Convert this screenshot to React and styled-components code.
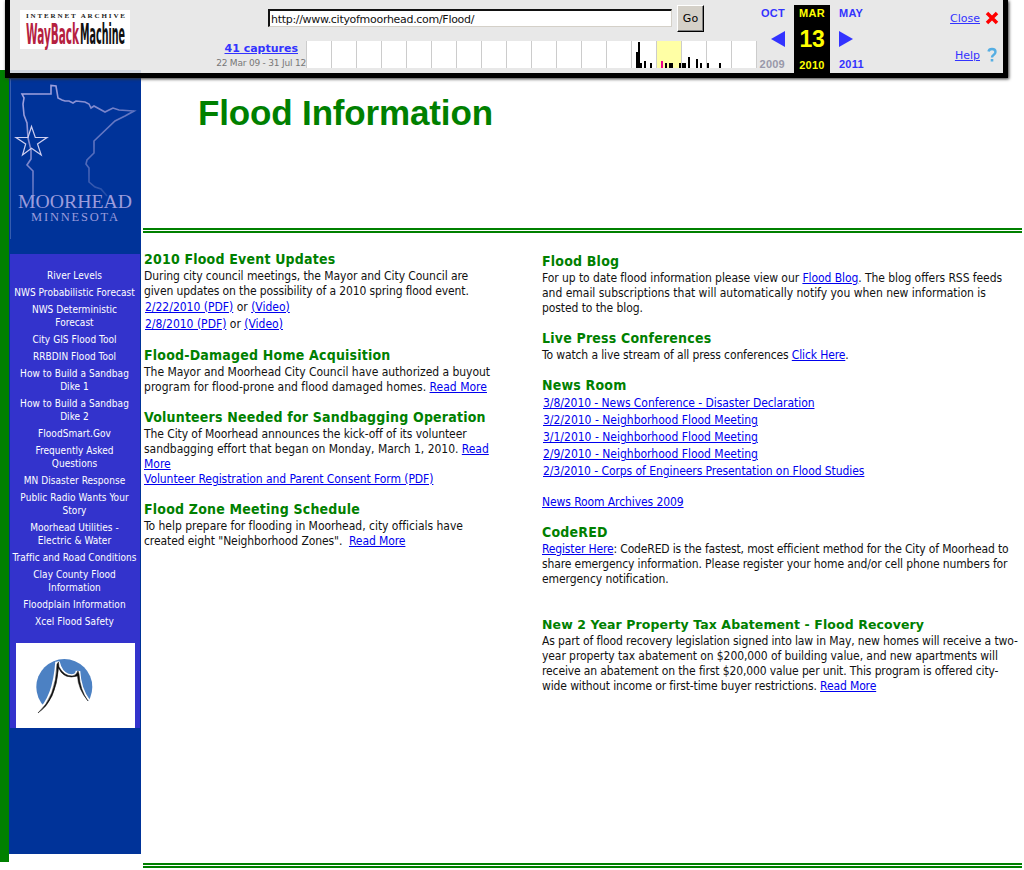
import React from "react";
import styled, { createGlobalStyle } from "styled-components";

const Global = createGlobalStyle`
  * { box-sizing: border-box; }
  html, body { margin: 0; padding: 0; background: #fff; overflow: hidden; }
  body { font-family: "DejaVu Sans Condensed", "DejaVu Sans", sans-serif; font-stretch: condensed; font-size: 12px; color: #111; }
`;

const Page = styled.div`
  position: relative;
  width: 1024px;
  height: 870px;
  padding-top: 70px;
  display: flex;
  align-items: flex-start;
  overflow: hidden;
`;
const GreenStrip = styled.div`width: 9px; height: 792px; background: #008000; flex: none;`;
const Sidebar = styled.aside`
  width: 132px; height: 784px; flex: none; background: #003399; padding: 0 1px;
`;
const MapArea = styled.div`height: 184px; svg { display: block; }`;
const Nav = styled.nav`
  height: 474px; background: #3333cc; padding: 15px 1px 0 0;
  display: flex; flex-direction: column; align-items: center; gap: 4px;
`;
const NavItem = styled.a`
  color: #fff; font-size: 10px; line-height: 13px; text-align: center; white-space: pre;
  letter-spacing: 0.05px;
`;
const Badge = styled.div`
  width: 119px; height: 85px; background: #fff; margin: 11px 0 0 1px; flex: none;
  svg { display: block; }
`;

const Main = styled.main`width: 879px; margin-left: 2px; height: 800px; display: flex; flex-direction: column;`;
const Title = styled.h1`
  margin: 0; height: 158px; padding: 22px 0 0 55px; color: #008000;
  font: bold 35px/42px "Liberation Sans", sans-serif; letter-spacing: -0.15px;
`;
const Rule = styled.div`height: 5px; flex: none; border-top: 2px solid #008000; border-bottom: 2px solid #008000;`;
const Columns = styled.div`height: 630px; display: flex;`;
const Column = styled.div`
  width: ${(p) => p.$w}px; padding: ${(p) => p.$top}px 0 0 1px; flex: none;
`;
const Story = styled.section`margin-bottom: ${(p) => p.$gap ?? 15}px;`;
const Heading = styled.h2`
  margin: 0; color: #008000; white-space: nowrap; height: 17px;
  font: bold 14px/17px "DejaVu Sans Condensed", "DejaVu Sans", sans-serif;
  font-stretch: condensed; letter-spacing: ${(p) => p.$track ?? 0.2}px;
`;
const WideHeading = styled(Heading)`
  font: bold 12.5px/17px "DejaVu Sans", sans-serif; font-stretch: normal;
`;
const Line = styled.div`
  height: ${(p) => (p.$tall ? 17 : 15)}px; line-height: ${(p) => (p.$tall ? 19 : 17)}px;
  padding-left: ${(p) => (p.$tall ? 1 : 0)}px; white-space: pre;
  letter-spacing: ${(p) => p.$track || 0}px;
`;
const Link = styled.a`color: #0000ee; text-decoration: underline; text-underline-offset: 1px; text-decoration-thickness: 1px;`;

const Toolbar = styled.header`
  position: absolute; left: 5px; top: 0; width: 1003px; height: 78px;
  border: solid #000; border-width: 0 5px 5px; background: rgba(231, 231, 231, 0.9);
  background-image: linear-gradient(#e8e8e8, #e8e8e8); background-size: 100% 70px; background-repeat: no-repeat;
  box-shadow: 1px 1px 3px #333; display: flex; font-family: "DejaVu Sans", sans-serif; font-stretch: normal;
`;
const LogoBox = styled.div`width: 110px; height: 39px; margin: 10px 0 0 10px; background: #fff; flex: none; svg { display: block; overflow: visible; }`;
const Center = styled.div`width: 660px; margin-left: 76px; flex: none;`;
const UrlRow = styled.div`height: 41px; padding: 5px 0 0 62px; display: flex; gap: 5px;`;
const UrlField = styled.div`
  width: 404px; height: 18px; margin-top: 4px; background: #fff; font-size: 11px; line-height: 17px; padding-left: 1px;
  letter-spacing: -0.3px;
  border: 2px solid; border-color: #111 #d4d0c8 #d4d0c8 #111; border-right-width: 1px; border-bottom-width: 1px; 
`;
const GoButton = styled.button`
  width: 27px; height: 27px; padding: 0; background: #d4d0c8; color: #000; font: 11px "DejaVu Sans", sans-serif;
  border: 1px solid; border-color: #fff #000 #000 #fff; box-shadow: inset -1px -1px #808080;
`;
const CaptureRow = styled.div`display: flex; height: 28px;`;
const Captures = styled.div`width: 100px; padding-top: 1px; text-align: right; white-space: nowrap;`;
const CaptureCount = styled.a`
  display: block; color: #3333ff; font-weight: bold; font-size: 11px; line-height: 14px; text-decoration: underline; padding-right: 8px;
`;
const CaptureRange = styled.div`font-size: 9px; line-height: 15px; color: #777; letter-spacing: -0.2px;`;
const Spark = styled.svg`display: block; flex: none;`;

const Dates = styled.div`display: flex; margin-left: -110px; margin-top: 5px; height: 68px; flex: none; font: bold 11px "Liberation Sans", sans-serif; letter-spacing: 0.25px;`;
const DateCol = styled.div`
  width: ${(p) => p.$w}px; padding: ${(p) => p.$pad || 0}; background: ${(p) => (p.$now ? "#000" : "transparent")};
  color: ${(p) => (p.$now ? "#ffff00" : "#3333ff")}; text-align: ${(p) => p.$align || "center"};
  display: flex; flex-direction: column; justify-content: space-between; height: 68px;
  svg { display: block; }
`;
const DateText = styled.span`line-height: 17px; color: ${(p) => p.$color || "inherit"};`;
const Day = styled.span`font-size: 23px; line-height: 35px; letter-spacing: -0.4px;`;
const Actions = styled.div`margin-left: auto; padding: 10px 4px 0 0; display: flex; flex-direction: column; align-items: flex-end; gap: 21px; flex: none;`;
const Action = styled.a`
  display: flex; align-items: center; gap: 5px; height: 16px; color: #3333ff; font-size: 11px; svg { display: block; }
  span { text-decoration: underline; text-underline-offset: 1px; }
`;

const A = ({ children }) => <Link>{children}</Link>;

const links = [
  "River Levels", "NWS Probabilistic Forecast", "NWS Deterministic\nForecast", "City GIS Flood Tool",
  "RRBDIN Flood Tool", "How to Build a Sandbag\nDike 1", "How to Build a Sandbag\nDike 2", "FloodSmart.Gov",
  "Frequently Asked\nQuestions", "MN Disaster Response", "Public Radio Wants Your\nStory",
  "Moorhead Utilities -\nElectric & Water", "Traffic and Road Conditions", "Clay County Flood\nInformation",
  "Floodplain Information", "Xcel Flood Safety",
];

function MapLogo() {
  return (
    <svg width="130" height="184" viewBox="10 70 130 184">
      <defs>
        <linearGradient id="fade" x1="22" y1="85" x2="115" y2="205" gradientUnits="userSpaceOnUse">
          <stop offset="0" stopColor="#a9a8e2" /><stop offset="0.45" stopColor="#7c86cc" /><stop offset="1" stopColor="#10409f" />
        </linearGradient>
      </defs>
      <path d="M33 204V171L27 165L31 159V150L28 138L27 123L24 115L23 104L24 98L22 94H51V85.500L56 86L58 98L62 100L65 101L69 101L73 103L76 101L85 102L89 104L91 108L94 106L105 112L109 110L113 108L119 110L134 111L125 116L115 121L94 141V153L87 160L86 164L89 168V182L95 187L101 189L107 196" fill="none" stroke="url(#fade)" strokeWidth="1.6" />
      <path d="M31.500 126.500L35.300 137.500H47L37.500 144L41.200 155L31.500 148.200L22.500 155L25.700 144L16 137.500H28Z" fill="none" stroke="#cfcff0" strokeWidth="1.2" />
      <g fill="#9c9cdc" fontFamily="Liberation Serif, serif">
        <text x="18" y="208" fontSize="19" textLength="114" lengthAdjust="spacingAndGlyphs">MOORHEAD</text>
        <text x="31" y="220.500" fontSize="12.500" textLength="87" lengthAdjust="spacing">MINNESOTA</text>
      </g>
      <path d="M10 79V239" stroke="#6c86c4" strokeWidth="1" />
    </svg>
  );
}

function BridgeLogo() {
  return (
    <svg width="119" height="85" viewBox="16 643 119 85">
      <circle cx="64.300" cy="687" r="28" fill="#4c81c3" />
      <path d="M34 718Q54 699 56 664L58 661Q63 675 71 677Q77 677 77.500 671Q80 672 80 682Q83 696 91 704V728H34Z" fill="#fff" />
      <path d="M38 713Q55 699 57.500 662Q60 673 68 676Q77 678 78 671Q79 689 88 701" fill="none" stroke="#fff" strokeWidth="4.500" />
      <path d="M38 713Q56 697 57 664L58.500 662L59 667Q64 676 72 676Q76 676 78 671L79 674Q80 690 88 701Q78 689 77.500 676Q64 680 58.500 668Q56 701 38 713Z" fill="#111" stroke="#111" strokeWidth=".5" />
    </svg>
  );
}

function WaybackLogo() {
  return (
    <svg width="110" height="39" viewBox="0 0 110 39">
      <text x="6" y="7.500" fontFamily="Liberation Serif, serif" fontWeight="bold" fontSize="7" textLength="99" lengthAdjust="spacing" fill="#222">INTERNET ARCHIVE</text>
      <g fontFamily="DejaVu Sans Condensed, sans-serif" fontWeight="bold">
        <text transform="translate(6 34) scale(1 1.6)" fontSize="18" textLength="53" lengthAdjust="spacingAndGlyphs" fill="#b5213f">WayBack</text>
        <text transform="translate(60 34) scale(1 1.6)" fontSize="18" textLength="45" lengthAdjust="spacingAndGlyphs" fill="#111">Machine</text>
      </g>
    </svg>
  );
}

const bars = [[330, 16], [332, 26], [334, 5], [338, 7], [344, 5], [359, 5], [363, 5], [365, 5], [373, 5], [376, 5], [378, 5], [382, 11], [390, 9], [394, 5], [401, 5], [413, 5]];

function Sparkline() {
  return (
    <Spark width="451" height="28" viewBox="0 0 451 28">
      <rect width="450" height="27" fill="#fff" />
      <rect x="350" width="25" height="27" fill="#ffffa5" />
      {Array.from({ length: 19 }, (_, i) => <rect key={i} x={i * 25} width="1" height="27" fill="#ccc" />)}
      {bars.map(([x, h]) => <rect key={x} x={x} y={27 - h} width="2" height={h} />)}
      <rect x="355" y="20" width="2" height="7" fill="#ec008c" />
    </Spark>
  );
}

export default function App() {
  return (
    <Page>
      <Global />
      <GreenStrip />
      <Sidebar>
        <MapArea><MapLogo /></MapArea>
        <Nav>
          {links.map((label) => <NavItem key={label}>{label}</NavItem>)}
          <Badge><BridgeLogo /></Badge>
        </Nav>
      </Sidebar>
      <Main>
        <Title>Flood Information</Title>
        <Rule />
        <Columns>
          <Column $w={398} $top={18}>
            <Story>
              <Heading>2010 Flood Event Updates</Heading>
              <Line $track={-0.07}>During city council meetings, the Mayor and City Council are</Line>
              <Line $track={-0.12}>given updates on the possibility of a 2010 spring flood event.</Line>
              <Line $tall><A>2/22/2010 (PDF)</A> or <A>(Video)</A></Line>
              <Line $tall><A>2/8/2010 (PDF)</A> or <A>(Video)</A></Line>
            </Story>
            <Story>
              <Heading>Flood-Damaged Home Acquisition</Heading>
              <Line $track={-0.03}>The Mayor and Moorhead City Council have authorized a buyout</Line>
              <Line $track={0.02}>program for flood-prone and flood damaged homes. <A>Read More</A></Line>
            </Story>
            <Story>
              <Heading>Volunteers Needed for Sandbagging Operation</Heading>
              <Line $track={-0.08}>The City of Moorhead announces the kick-off of its volunteer</Line>
              <Line $track={-0.03}>sandbagging effort that began on Monday, March 1, 2010. <A>Read</A></Line>
              <Line><A>More</A></Line>
              <Line $track={-0.07}><A>Volunteer Registration and Parent Consent Form (PDF)</A></Line>
            </Story>
            <Story>
              <Heading>Flood Zone Meeting Schedule</Heading>
              <Line $track={-0.02}>To help prepare for flooding in Moorhead, city officials have</Line>
              <Line $track={-0.09}>created eight "Neighborhood Zones".  <A>Read More</A></Line>
            </Story>
          </Column>
          <Column $w={481} $top={20}>
            <Story>
              <Heading>Flood Blog</Heading>
              <Line $track={-0.07}>For up to date flood information please view our <A>Flood Blog</A>. The blog offers RSS feeds</Line>
              <Line $track={-0.02}>and email subscriptions that will automatically notify you when new information is</Line>
              <Line $track={-0.08}>posted to the blog.</Line>
            </Story>
            <Story>
              <Heading>Live Press Conferences</Heading>
              <Line $track={-0.12}>To watch a live stream of all press conferences <A>Click Here</A>.</Line>
            </Story>
            <Story>
              <Heading>News Room</Heading>
              <Line $tall $track={-0.06}><A>3/8/2010 - News Conference - Disaster Declaration</A></Line>
              <Line $tall><A>3/2/2010 - Neighborhood Flood Meeting</A></Line>
              <Line $tall><A>3/1/2010 - Neighborhood Flood Meeting</A></Line>
              <Line $tall><A>2/9/2010 - Neighborhood Flood Meeting</A></Line>
              <Line $tall $track={-0.07}><A>2/3/2010 - Corps of Engineers Presentation on Flood Studies</A></Line>
            </Story>
            <Story><Line $track={-0.09}><A>News Room Archives 2009</A></Line></Story>
            <Story $gap={30}>
              <Heading>CodeRED</Heading>
              <Line $track={-0.15}><A>Register Here</A>: CodeRED is the fastest, most efficient method for the City of Moorhead to</Line>
              <Line $track={-0.12}>share emergency information. Please register your home and/or cell phone numbers for</Line>
              <Line $track={-0.07}>emergency notification.</Line>
            </Story>
            <Story>
              <WideHeading $track={0.1}>New 2 Year Property Tax Abatement - Flood Recovery</WideHeading>
              <Line $track={-0.12}>As part of flood recovery legislation signed into law in May, new homes will receive a two-</Line>
              <Line $track={-0.08}>year property tax abatement on $200,000 of building value, and new apartments will</Line>
              <Line $track={-0.125}>receive an abatement on the first $20,000 value per unit. This program is offered city-</Line>
              <Line $track={-0.125}>wide without income or first-time buyer restrictions. <A>Read More</A></Line>
            </Story>
          </Column>
        </Columns>
        <Rule />
      </Main>
      <Toolbar>
        <LogoBox><WaybackLogo /></LogoBox>
        <Center>
          <UrlRow>
            <UrlField>http://www.cityofmoorhead.com/Flood/</UrlField>
            <GoButton>Go</GoButton>
          </UrlRow>
          <CaptureRow>
            <Captures>
              <CaptureCount>41 captures</CaptureCount>
              <CaptureRange>22 Mar 09 - 31 Jul 12</CaptureRange>
            </Captures>
            <Sparkline />
          </CaptureRow>
        </Center>
        <Dates>
          <DateCol $w={38} $pad="0 9px 0 0" $align="right">
            <DateText>OCT</DateText>
            <svg width="29" height="16"><path d="M15 8L29 0V16Z" fill="#3333ff" /></svg>
            <DateText $color="#9999aa">2009</DateText>
          </DateCol>
          <DateCol $w={36} $now><DateText>MAR</DateText><Day>13</Day><DateText>2010</DateText></DateCol>
          <DateCol $w={45} $pad="0 0 0 9px" $align="left">
            <DateText>MAY</DateText>
            <svg width="16" height="16"><path d="M0 0L14 8L0 16Z" fill="#3333ff" /></svg>
            <DateText>2011</DateText>
          </DateCol>
        </Dates>
        <Actions>
          <Action><span>Close</span><svg width="14" height="14"><path d="M2 2L12 12M12 2L2 12" stroke="#ff0000" strokeWidth="3.500" /></svg></Action>
          <Action><span>Help</span><svg width="14" height="16"><path d="M3.500 4.500Q4 2 7 2Q10.500 2 10.500 5Q10.500 6.500 8.500 8Q7 9 7 10.500" fill="none" stroke="#55aee3" strokeWidth="2.400" /><rect x="5.700" y="12" width="2.600" height="2.500" fill="#55aee3" /></svg></Action>
        </Actions>
      </Toolbar>
    </Page>
  );
}
